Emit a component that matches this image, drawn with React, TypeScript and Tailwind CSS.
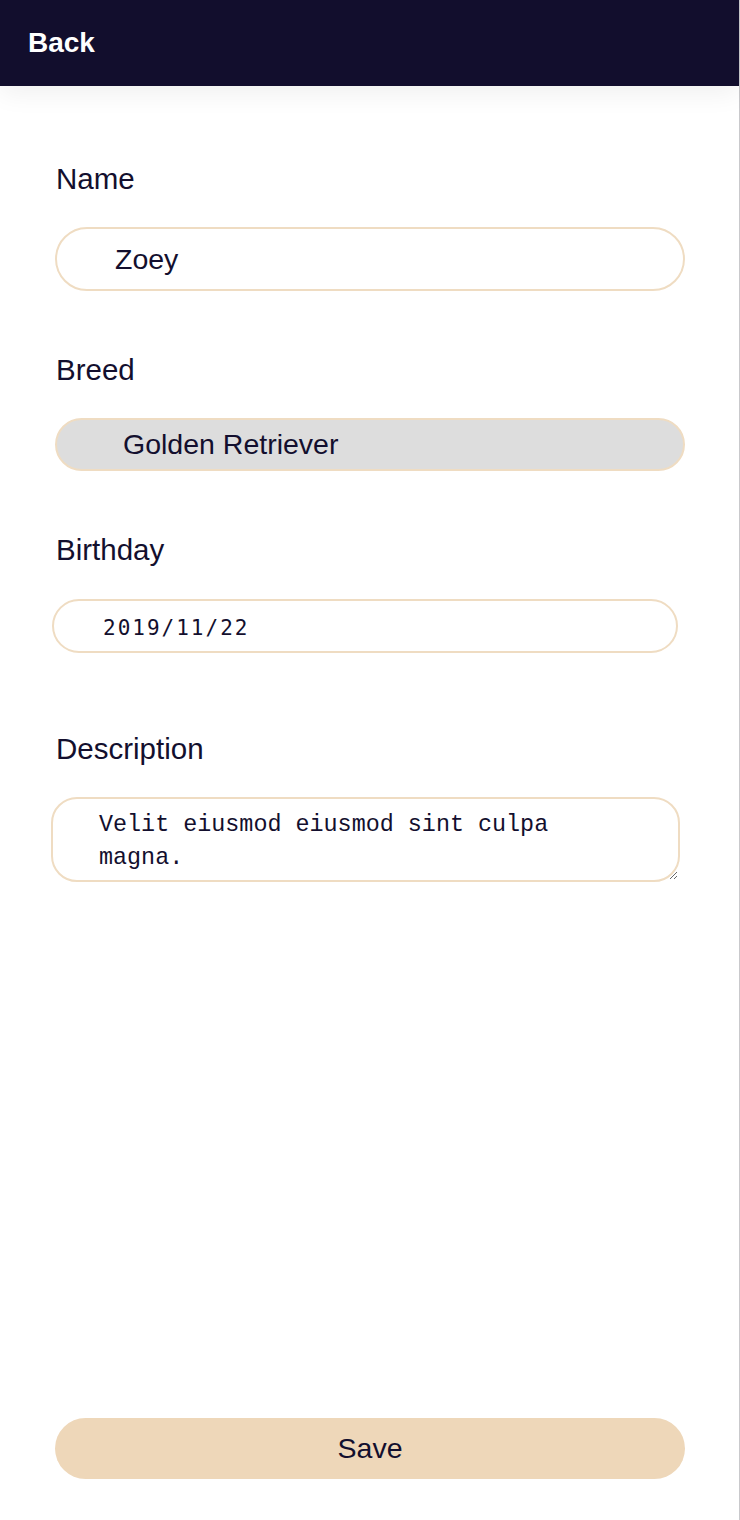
import React from 'react';

const sans = "font-['Liberation_Sans',Arial,sans-serif]";

interface FieldLabelProps {
  children: React.ReactNode;
}

const FieldLabel: React.FC<FieldLabelProps> = ({ children }) => (
  <label className={`${sans} block text-[29.5px] leading-[32px] text-[#130f2e] ml-[56px]`}>
    {children}
  </label>
);

export default function App() {
  return (
    <div className="flex flex-col h-[1520px] w-[740px] bg-white border-r border-[#c9c9cc]">
      {/* Top bar */}
      <header className="relative z-10 flex items-center h-[86px] bg-[#120e2d] px-[28px] shadow-[0_8px_24px_rgba(0,0,0,0.06)]">
        <button className={`${sans} text-[28px] font-bold text-white leading-none`}>Back</button>
      </header>

      {/* Form */}
      <div className="flex-1 flex flex-col pt-[77px]">
        <FieldLabel>Name</FieldLabel>
        <input
          readOnly
          value="Zoey"
          className={`${sans} mt-[32px] ml-[55px] w-[630px] h-[64px] rounded-full border-2 border-[#efdcc2] bg-white pl-[58px] text-[28.5px] text-[#130f2e] outline-none`}
        />

        <div className="mt-[63px]">
          <FieldLabel>Breed</FieldLabel>
        </div>
        <input
          readOnly
          value="Golden Retriever"
          className={`${sans} mt-[32px] ml-[55px] w-[630px] h-[53px] rounded-full border-2 border-[#efdcc2] bg-[#dddddd] pl-[66px] text-[28.5px] text-[#130f2e] outline-none`}
        />

        <div className="mt-[63px]">
          <FieldLabel>Birthday</FieldLabel>
        </div>
        <input
          readOnly
          value="2019/11/22"
          className="mt-[33px] ml-[52px] w-[626px] h-[54px] rounded-full border-2 border-[#efdcc2] bg-white pl-[49px] pt-[3px] font-['DejaVu_Sans_Mono',monospace] text-[21px] tracking-[2px] text-[#130f2e] outline-none"
        />

        <div className="mt-[80px]">
          <FieldLabel>Description</FieldLabel>
        </div>
        <textarea
          readOnly
          value="Velit eiusmod eiusmod sint culpa magna."
          className="mt-[32px] ml-[51px] w-[629px] h-[85px] rounded-[26px] border-2 border-[#efdcc2] bg-white pl-[46px] pr-[120px] pt-[10px] font-['Liberation_Mono','Courier_New',monospace] text-[23.4px] leading-[33px] text-[#130f2e] outline-none"
        />
      </div>

      {/* Save */}
      <button
        className={`${sans} mb-[41px] ml-[55px] w-[630px] h-[61px] rounded-full bg-[#eed7b9] text-[28.5px] text-[#130f2e]`}
      >
        Save
      </button>
    </div>
  );
}
